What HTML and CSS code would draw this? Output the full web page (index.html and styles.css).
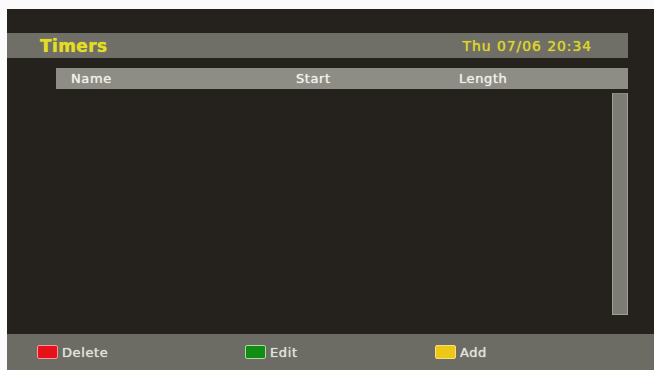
FILE: index.html
```html
<!DOCTYPE html>
<html lang="en">
<head>
  <meta charset="UTF-8" />
  <title>Timers</title>
  <link rel="stylesheet" href="styles.css">
</head>
<body>

  <div class="screen">
    <div class="title-bar">
      <span class="title">Timers</span>
      <span class="clock">Thu 07/06 20:34</span>
    </div>

    <div class="columns">
      <span>Name</span>
      <span>Start</span>
      <span>Length</span>
    </div>

    <div class="list">
      <div class="scrollbar"></div>
    </div>

    <div class="keys">
      <div class="key"><span class="btn red"></span>Delete</div>
      <div class="key"><span class="btn green"></span>Edit</div>
      <div class="key"><span class="btn yellow"></span>Add</div>
    </div>
  </div>

</body>
</html>
```

FILE: styles.css
```css
body {
  margin: 0;
  background: #fbfbfb;
  font-family: 'DejaVu Sans', sans-serif;
}
.screen {
  margin: 9px 0 0 7px;
  height: 361px;
  background: #25221e;
  display: flex;
  flex-direction: column;
}
.title-bar {
  margin: 24px 26px 0 0;
  height: 25px;
  background: #6f6e67;
  display: flex;
  align-items: center;
  justify-content: space-between;
  padding: 0 36px 0 33px;
}
.title {
  color: #e4dd26;
  font-weight: bold;
  font-size: 17px;
  letter-spacing: 0.4px;
  text-shadow: 0 0 1px #e4dd26;
}
.clock {
  color: #dcd62c;
  font-size: 14px;
  letter-spacing: 0.9px;
  text-shadow: 0 0 1px #dcd62c;
}
.columns {
  margin: 10px 26px 0 49px;
  height: 21px;
  background: #8d8c85;
  display: grid;
  grid-template-columns: 225px 163px 1fr;
  align-items: center;
  padding-left: 15px;
  color: #f0f0e8;
  font-size: 13px;
  letter-spacing: 0.6px;
  text-shadow: 0 0 1px #f0f0e8;
}
.list {
  margin: 4px 26px 0 0;
  height: 222px;
  display: flex;
  justify-content: flex-end;
}
.scrollbar {
  width: 14px;
  background: #7c7b74;
  border: 1px solid #a09f98;
  border-top-color: #8a8982;
}
.keys {
  margin-top: auto;
  height: 36px;
  background: #6c6b64;
  display: grid;
  grid-template-columns: 208px 190px 1fr;
  align-items: center;
  padding-left: 30px;
  color: #e2e2dc;
  font-size: 13px;
  letter-spacing: 0.6px;
  text-shadow: 0 0 1px #e2e2dc;
}
.key {
  display: flex;
  align-items: center;
}
.btn {
  width: 19px;
  height: 12px;
  margin-right: 4px;
  border: 1px solid #d8d8d0;
  border-radius: 2px;
}
.red { background: #e8101a; border-color: #f09a9a; }
.green { background: #138c16; border-color: #a8dca0; }
.yellow { background: #eec816; border-color: #f4e080; }
```
